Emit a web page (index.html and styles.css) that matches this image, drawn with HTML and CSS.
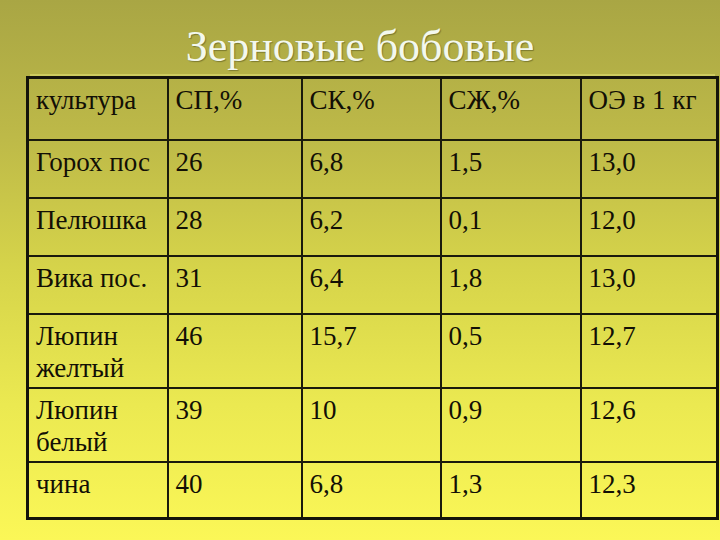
FILE: index.html
```html
<!DOCTYPE html>
<html>
<head>
<meta charset="utf-8">
<link rel="stylesheet" href="styles.css">
</head>
<body>
<div class="slide">
  <h1 class="title">Зерновые бобовые</h1>
  <table class="grid">
    <colgroup>
      <col class="c1"><col class="c2"><col class="c3"><col class="c4"><col class="c5">
    </colgroup>
    <tr class="r-head"><td>культура</td><td>СП,%</td><td>СК,%</td><td>СЖ,%</td><td>ОЭ в 1 кг</td></tr>
    <tr class="r-one"><td>Горох пос</td><td>26</td><td>6,8</td><td>1,5</td><td>13,0</td></tr>
    <tr class="r-one"><td>Пелюшка</td><td>28</td><td>6,2</td><td>0,1</td><td>12,0</td></tr>
    <tr class="r-one"><td>Вика пос.</td><td>31</td><td>6,4</td><td>1,8</td><td>13,0</td></tr>
    <tr class="r-two"><td>Люпин желтый</td><td>46</td><td>15,7</td><td>0,5</td><td>12,7</td></tr>
    <tr class="r-two"><td>Люпин белый</td><td>39</td><td>10</td><td>0,9</td><td>12,6</td></tr>
    <tr class="r-last"><td>чина</td><td>40</td><td>6,8</td><td>1,3</td><td>12,3</td></tr>
  </table>
</div>
</body>
</html>
```
FILE: styles.css
```css
body {
  margin: 0;
  font-family: "Liberation Serif", "Times New Roman", Tinos, serif;
}
.slide {
  height: 540px;
  display: flex;
  flex-direction: column;
  background: linear-gradient(to bottom, #a9a644 0%, #bdb948 25%, #d6d44a 50%, #ebe951 75%, #fbf757 100%);
}
.title {
  margin: 0;
  padding-top: 24px;
  height: 47px;
  font-weight: normal;
  font-size: 44px;
  line-height: 46px;
  text-align: center;
  color: #f3f8ee;
  font-family: "Liberation Serif", "Times New Roman", Tinos, serif;
  text-shadow: 1px 1px 1px rgba(60, 60, 20, 0.45);
}
.grid {
  margin: 5px 0 0 26px;
  border-collapse: collapse;
  table-layout: fixed;
  width: 690px;
  border: 3px solid #14140a;
  box-shadow: 0 -6px 0 -4px rgba(230, 230, 120, 0.5);
}
.c1 { width: 140px; }
.c2 { width: 134px; }
.c3 { width: 139px; }
.c4 { width: 140px; }
.c5 { width: 137px; }
.grid td {
  border: 2px solid #1a1a0c;
  padding: 5px 0 0 7px;
  vertical-align: top;
  font-family: "Liberation Serif", "Times New Roman", Tinos, serif;
  font-size: 27px;
  line-height: 32px;
  color: #120f05;
}
.r-head td { height: 55px; }
.r-one td { height: 51px; }
.r-two td { height: 67px; }
.r-last td { height: 49px; }
```
